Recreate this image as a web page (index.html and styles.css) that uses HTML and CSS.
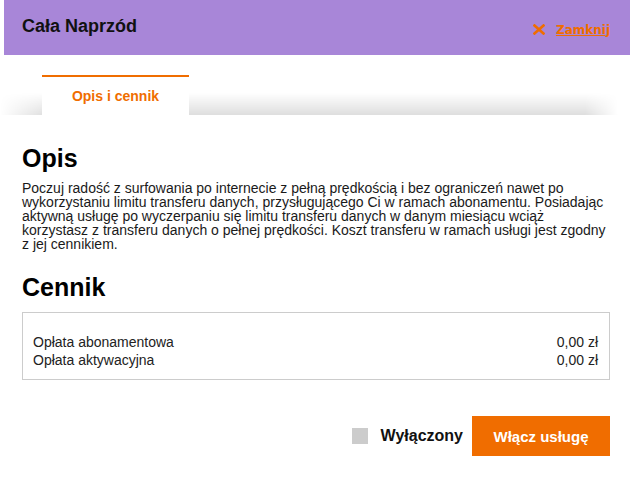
FILE: index.html
```html
<!DOCTYPE html>
<html lang="pl">
<head>
<meta charset="utf-8">
<title>Cała Naprzód</title>
<link rel="stylesheet" href="styles.css">
</head>
<body>
<div class="modal">
  <header class="header">
    <h1 class="title">Cała Naprzód</h1>
    <a class="close" href="#">
      <svg class="close-icon" width="12" height="11" viewBox="0 0 12 11" aria-hidden="true">
        <path d="M1.5 1.5 L10.5 9.5 M10.5 1.5 L1.5 9.5" stroke="#f06d00" stroke-width="2.6" stroke-linecap="square" fill="none"/>
      </svg>
      <span class="close-text">Zamknij</span>
    </a>
  </header>
  <nav class="tabs">
    <div class="tab active">Opis i cennik</div>
  </nav>
  <main class="content">
    <h2 class="section-title">Opis</h2>
    <p class="desc">Poczuj radość z surfowania po internecie z pełną prędkością i bez ograniczeń nawet po wykorzystaniu limitu transferu danych, przysługującego Ci w ramach abonamentu. Posiadając aktywną usługę po wyczerpaniu się limitu transferu danych w danym miesiącu wciąż korzystasz z transferu danych o pełnej prędkości. Koszt transferu w ramach usługi jest zgodny z jej cennikiem.</p>
    <h2 class="section-title cennik">Cennik</h2>
    <div class="price-box">
      <div class="price-row"><span>Opłata abonamentowa</span><span class="val">0,00 zł</span></div>
      <div class="price-row"><span>Opłata aktywacyjna</span><span class="val">0,00 zł</span></div>
    </div>
    <div class="actions">
      <label class="status"><span class="checkbox"></span><span class="status-text">Wyłączony</span></label>
      <button class="btn">Włącz usługę</button>
    </div>
  </main>
</div>
</body>
</html>
```
FILE: styles.css
```css
* { box-sizing: border-box; }
html, body { margin: 0; padding: 0; background: #fff; }
body { font-family: "Liberation Sans", Arial, sans-serif; color: #111; }
.modal { margin-left: 4px; width: 626px; }
.header {
  height: 55px;
  background: #a886d8;
  display: flex;
  align-items: center;
  justify-content: space-between;
  padding: 0 20px 0 18px;
}
.title { margin: 0 0 3px; font-size: 18px; font-weight: bold; color: #111; }
.close { display: flex; align-items: center; text-decoration: none; padding-top: 4px; }
.close-icon { display: block; margin-right: 11px; }
.close-text {
  font-family: "DejaVu Sans", Verdana, sans-serif;
  font-weight: bold;
  font-size: 12px;
  color: #f06d00;
  text-decoration: underline;
}
.tabs {
  height: 60px;
  padding: 20px 0 0 42px;
  display: flex;
  position: relative;
  margin-left: -4px;
}
.tabs::before {
  content: "";
  position: absolute;
  left: 0; right: 12px; bottom: 0;
  height: 22px;
  background: linear-gradient(to bottom, rgba(0,0,0,0), rgba(0,0,0,0.13));
  -webkit-mask-image: linear-gradient(to right, transparent 0, #000 45px, #000 585px, transparent 618px);
  mask-image: linear-gradient(to right, transparent 0, #000 45px, #000 585px, transparent 618px);
}
.tab {
  position: relative;
  width: 147px;
  height: 40px;
  background: #fff;
  border-top: 2px solid #f06d00;
  color: #f06d00;
  font-weight: bold;
  font-size: 14px;
  display: flex;
  align-items: center;
  justify-content: center;
  padding-bottom: 1px;
}
.content { padding: 29px 20px 30px 18px; }
.section-title { margin: 0; font-size: 25px; line-height: 28px; font-weight: bold; color: #000; }
.desc { margin: 9px 0 0; font-size: 14px; line-height: 14px; color: #1a1a1a; }
.cennik { margin-top: 22px; }
.price-box {
  margin-top: 11px;
  border: 1px solid #ccc;
  padding: 20px 11px 10px 10px;
}
.price-row {
  display: flex;
  justify-content: space-between;
  font-size: 14px;
  line-height: 18px;
  color: #222;
}
.actions {
  margin-top: 36px;
  display: flex;
  justify-content: flex-end;
  align-items: center;
}
.status { display: flex; align-items: center; margin-right: 9px; }
.checkbox { width: 16px; height: 16px; background: #cccccc; display: block; margin-right: 13px; }
.status-text { font-size: 16px; font-weight: bold; color: #111; }
.btn {
  width: 138px;
  height: 40px;
  border: 0;
  background: #f06d00;
  color: #fff;
  font-family: "Liberation Sans", Arial, sans-serif;
  font-weight: bold;
  font-size: 15px;
  padding: 0;
}
```
